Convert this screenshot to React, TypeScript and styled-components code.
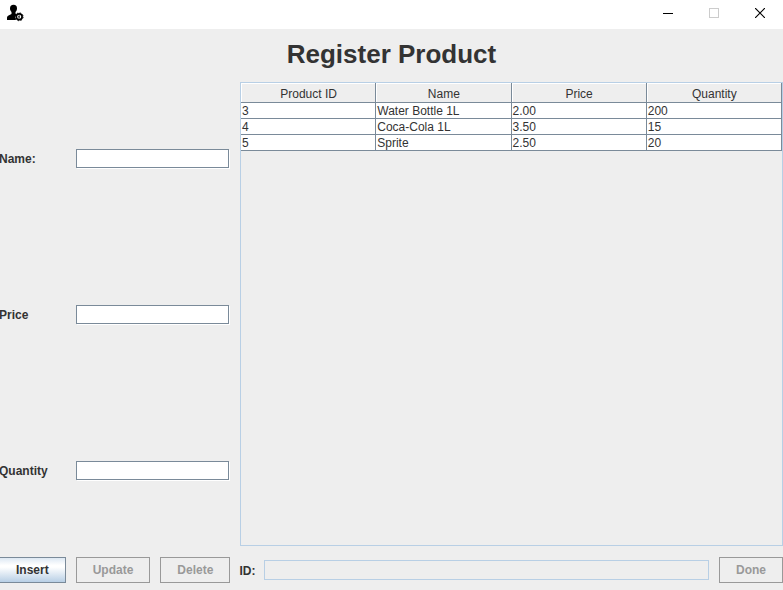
import React from "react";
import styled, { createGlobalStyle } from "styled-components";

const GlobalStyle = createGlobalStyle`
  * { box-sizing: border-box; }
  body {
    margin: 0;
    background: #eeeeee;
    color: #333333;
    font-family: "Liberation Sans", Arial, sans-serif;
    font-size: 12px;
    line-height: 16px;
  }
`;

const Window = styled.div`
  display: flex;
  flex-direction: column;
  min-height: 100vh;
`;

const TitleBar = styled.header`
  display: flex;
  align-items: flex-start;
  justify-content: space-between;
  height: 29px;
  padding-left: 6px;
  background: #ffffff;
`;

const AppIcon = styled.svg`
  width: 18px;
  height: 18px;
  margin-top: 4px;
`;

const WindowControls = styled.div`
  display: flex;
`;

const WindowButton = styled.button`
  display: flex;
  align-items: center;
  justify-content: center;
  width: 46px;
  height: 26px;
  padding: 0;
  border: 0;
  background: transparent;
  color: #000000;

  &:disabled { color: #cccccc; }
`;

const Heading = styled.h1`
  margin: 0;
  padding: 10px 0 11px;
  font-size: 26px;
  line-height: 30px;
  text-align: center;
`;

const Content = styled.main`
  display: grid;
  grid-template-columns: 230px 1fr;
  column-gap: 10px;
  flex: 1;
`;

const Form = styled.form`
  display: grid;
  grid-template-rows: repeat(3, 1fr);
`;

const Field = styled.div`
  display: grid;
  grid-template-columns: 66px 1fr;
  column-gap: 10px;
  align-items: center;
  padding-right: 1px;
`;

const Label = styled.label`
  margin-left: -1px;
  padding-top: 2px;
  font-weight: bold;
`;

const TextInput = styled.input`
  width: 100%;
  height: 19px;
  padding: 0 2px;
  border: 1px solid #7a8a99;
  background: #ffffff;
  box-shadow: 1px 1px #ffffff;
  font: inherit;
  outline: none;
`;

const TablePane = styled.section`
  margin: 2px 0;
  border: 1px solid #b8cfe5;
`;

const Table = styled.table`
  width: 100%;
  table-layout: fixed;
  border-collapse: separate;
  border-spacing: 0;
`;

const HeadCell = styled.th`
  height: 20px;
  padding: 2px 0 0 1px;
  border: 1px solid #7a8a99;
  border-width: 0 1px 1px 0;
  box-shadow: inset 1px 1px #ffffff;
  font-weight: normal;
  line-height: 16px;
`;

const Cell = styled.td`
  height: 16px;
  padding: 1px 1px 0;
  border: 1px solid #7a8a99;
  border-width: 0 1px 1px 0;
  background: #ffffff;
  line-height: 14px;
`;

const ActionBar = styled.footer`
  display: flex;
  align-items: center;
  gap: 10px;
  padding: 9px 0 7px;
`;

const ActionButton = styled.button<{ $flushLeft?: boolean }>`
  height: 26px;
  padding: 0 16px;
  border: 1px solid #7a8a99;
  ${({ $flushLeft }) => $flushLeft && "border-left: 0;"}
  background: linear-gradient(#dde8f3, #ffffff 30%, #ffffff 38%, #b8cfe5);
  color: #333333;
  font: inherit;
  font-weight: bold;

  &:disabled {
    border-color: #999999;
    background: #eeeeee;
    color: #999999;
  }
`;

const IdField = styled.div`
  display: flex;
  align-items: center;
  gap: 9px;
  flex: 1;
`;

const ReadOnlyInput = styled.input`
  flex: 1;
  min-width: 0;
  height: 20px;
  border: 1px solid #b8cfe5;
  background: #eeeeee;
  font: inherit;
  outline: none;
`;

const fields = [
  { id: "name", label: "Name:" },
  { id: "price", label: "Price" },
  { id: "quantity", label: "Quantity" },
];

const columns = ["Product ID", "Name", "Price", "Quantity"];

const products = [
  ["3", "Water Bottle 1L", "2.00", "200"],
  ["4", "Coca-Cola 1L", "3.50", "15"],
  ["5", "Sprite", "2.50", "20"],
];

export default function App() {
  return (
    <Window>
      <GlobalStyle />
      <TitleBar>
        <AppIcon viewBox="0 0 18 18" aria-hidden="true">
          <ellipse cx="7.500" cy="4.400" rx="3.500" ry="3.700" />
          <path d="M5.500 7h4v2.500l1 1-1.500 2.500 1 3H1v-2c0-1.200.5-2 1.500-2.400L5.500 10z" />
          <circle cx="13.200" cy="12.800" r="2.900" fill="#ffffff" stroke="#000000" strokeWidth="1.700" />
          <circle cx="13.200" cy="12.800" r="3.900" fill="none" stroke="#000000" strokeDasharray="1.530 1.530" />
          <path d="M13.200 11.200v3.200M12 12.800h1.500" stroke="#000000" strokeWidth=".8" />
        </AppIcon>
        <WindowControls>
          <WindowButton aria-label="Minimize">
            <svg width="10" height="10" shapeRendering="crispEdges">
              <path d="M0 5.500h10" stroke="currentColor" />
            </svg>
          </WindowButton>
          <WindowButton aria-label="Maximize" disabled>
            <svg width="10" height="10" shapeRendering="crispEdges">
              <path d="M.5.5h9v9h-9z" fill="none" stroke="currentColor" />
            </svg>
          </WindowButton>
          <WindowButton aria-label="Close">
            <svg width="10" height="10">
              <path d="M0 0l10 10M10 0L0 10" stroke="currentColor" strokeWidth="1.200" />
            </svg>
          </WindowButton>
        </WindowControls>
      </TitleBar>
      <Heading>Register Product</Heading>
      <Content>
        <Form>
          {fields.map(({ id, label }) => (
            <Field key={id}>
              <Label htmlFor={id}>{label}</Label>
              <TextInput id={id} type="text" />
            </Field>
          ))}
        </Form>
        <TablePane>
          <Table>
            <thead>
              <tr>
                {columns.map((column) => (
                  <HeadCell key={column} scope="col">{column}</HeadCell>
                ))}
              </tr>
            </thead>
            <tbody>
              {products.map((row) => (
                <tr key={row[0]}>
                  {row.map((value, i) => (
                    <Cell key={columns[i]}>{value}</Cell>
                  ))}
                </tr>
              ))}
            </tbody>
          </Table>
        </TablePane>
      </Content>
      <ActionBar>
        <ActionButton type="button" $flushLeft>Insert</ActionButton>
        <ActionButton type="button" disabled>Update</ActionButton>
        <ActionButton type="button" disabled>Delete</ActionButton>
        <IdField>
          <Label htmlFor="product-id">ID:</Label>
          <ReadOnlyInput id="product-id" type="text" readOnly />
        </IdField>
        <ActionButton type="button" disabled>Done</ActionButton>
      </ActionBar>
    </Window>
  );
}
